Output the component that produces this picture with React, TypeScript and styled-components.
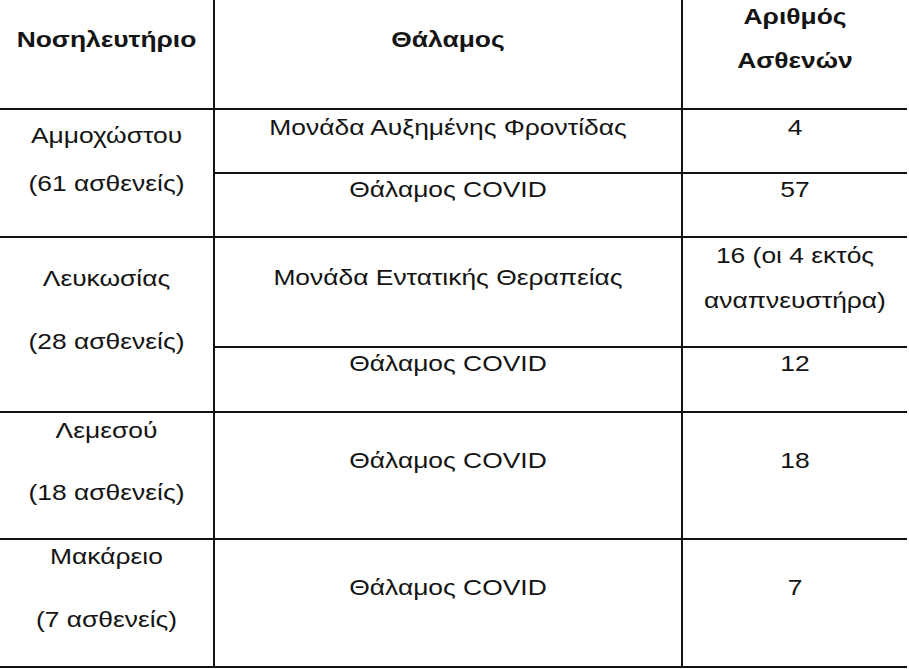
import { Fragment } from 'react';
import styled, { createGlobalStyle } from 'styled-components';

const GlobalStyle = createGlobalStyle`
  html, body {
    margin: 0;
    padding: 0;
    background: #ffffff;
  }
  body {
    font-family: "Liberation Sans", Arial, sans-serif;
    color: #141414;
  }
`;

const Table = styled.div`
  display: grid;
  width: 907px;
  grid-template-columns: 215px 468px 224px;
  grid-template-rows: 110px 64px 64px 110px 65px 127px 128px;
`;

const Cell = styled.div<{ $row: string; $col: number; $pt: number; $last?: boolean }>`
  grid-row: ${(p) => p.$row};
  grid-column: ${(p) => p.$col};
  box-sizing: border-box;
  padding-top: ${(p) => p.$pt}px;
  border-bottom: 2px solid #111;
  border-right: ${(p) => (p.$last ? 'none' : '2px solid #111')};
  text-align: center;
  font-size: 22px;
`;

const Line = styled.div<{ $gap?: number; $bold?: boolean }>`
  line-height: 26px;
  margin-top: ${(p) => p.$gap ?? 0}px;
  font-weight: ${(p) => (p.$bold ? 700 : 400)};
  white-space: nowrap;
  transform: scaleX(1.2);
  transform-origin: center;
`;

type Hospital = {
  name: string;
  count: string;
  row: string;
  pt: number;
  gap: number;
};

const hospitals: Hospital[] = [
  { name: 'Αμμοχώστου', count: '(61 ασθενείς)', row: '2 / 4', pt: 13, gap: 22 },
  { name: 'Λευκωσίας', count: '(28 ασθενείς)', row: '4 / 6', pt: 28, gap: 37 },
  { name: 'Λεμεσού', count: '(18 ασθενείς)', row: '6 / 7', pt: 5, gap: 36 },
  { name: 'Μακάρειο', count: '(7 ασθενείς)', row: '7 / 8', pt: 4, gap: 37 },
];

type Ward = {
  ward: string;
  patients: string[];
  row: string;
  pt: number;
  countPt?: number;
};

const wards: Ward[] = [
  { ward: 'Μονάδα Αυξημένης Φροντίδας', patients: ['4'], row: '2', pt: 5 },
  { ward: 'Θάλαμος COVID', patients: ['57'], row: '3', pt: 3 },
  {
    ward: 'Μονάδα Εντατικής Θεραπείας',
    patients: ['16 (οι 4 εκτός', 'αναπνευστήρα)'],
    row: '4',
    pt: 27,
    countPt: 5,
  },
  { ward: 'Θάλαμος COVID', patients: ['12'], row: '5', pt: 3 },
  { ward: 'Θάλαμος COVID', patients: ['18'], row: '6', pt: 35 },
  { ward: 'Θάλαμος COVID', patients: ['7'], row: '7', pt: 35 },
];

export default function App() {
  return (
    <>
      <GlobalStyle />
      <Table>
        <Cell $row="1" $col={1} $pt={27}>
          <Line $bold>Νοσηλευτήριο</Line>
        </Cell>
        <Cell $row="1" $col={2} $pt={27}>
          <Line $bold>Θάλαμος</Line>
        </Cell>
        <Cell $row="1" $col={3} $pt={4} $last>
          <Line $bold>Αριθμός</Line>
          <Line $bold $gap={18}>
            Ασθενών
          </Line>
        </Cell>

        {hospitals.map((h) => (
          <Cell key={h.name} $row={h.row} $col={1} $pt={h.pt}>
            <Line>{h.name}</Line>
            <Line $gap={h.gap}>{h.count}</Line>
          </Cell>
        ))}

        {wards.map((w) => (
          <Fragment key={w.row}>
            <Cell $row={w.row} $col={2} $pt={w.pt}>
              <Line>{w.ward}</Line>
            </Cell>
            <Cell $row={w.row} $col={3} $pt={w.countPt ?? w.pt} $last>
              {w.patients.map((t, i) => (
                <Line key={t} $gap={i > 0 ? 19 : 0}>
                  {t}
                </Line>
              ))}
            </Cell>
          </Fragment>
        ))}
      </Table>
    </>
  );
}
